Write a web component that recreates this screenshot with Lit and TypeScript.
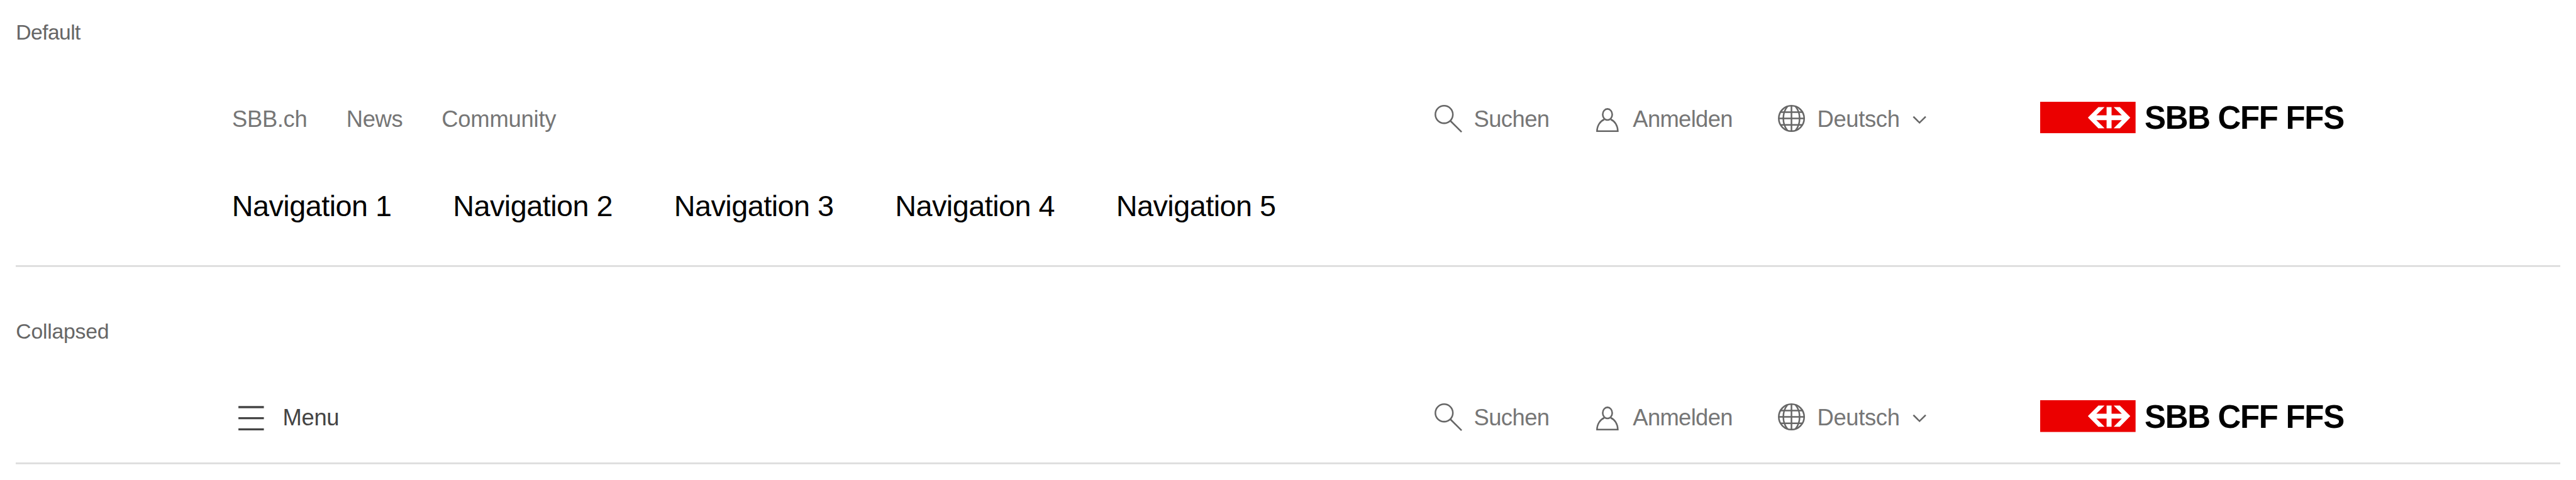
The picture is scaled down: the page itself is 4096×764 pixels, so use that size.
import { LitElement, html, css, svg, unsafeCSS } from "lit";
import { customElement, property } from "lit/decorators.js";

const SCALE = 4096 / 4860;
const u = (n: number) => unsafeCSS(`${(n * SCALE).toFixed(3)}px`);

const searchIcon = svg`
  <circle cx="24" cy="24" r="16.5" />
  <path d="M36 36.2 57 57.2" />`;

const personIcon = svg`
  <ellipse cx="33.2" cy="24" rx="9" ry="10.5" />
  <path d="M27.4 33.2C19.5 36.5 13.5 45 13.5 55.5H52.7C52.7 45 47 36.5 39.2 33.2" />`;

const globeIcon = svg`
  <circle cx="31.5" cy="31.5" r="24" />
  <path d="M31.5 7.5V55.5M7.5 31.5H55.5M10.7 19.5H52.3M10.7 43.5H52.3" />
  <path d="M23.7 9.2C13.6 21 13.6 42 23.7 53.8M39.3 9.2C49.4 21 49.4 42 39.3 53.8" />`;

@customElement("sbb-logo")
export class SbbLogo extends LitElement {
  static styles = css`
    :host { display: flex; align-items: flex-start; }
    .sign { display: block; flex: none; width: ${u(180)}; height: ${u(60)}; }
    .name {
      padding: ${u(2.9)} 0 0 ${u(17)};
      font-size: ${u(60.5)};
      font-weight: 700;
      line-height: ${u(58)};
      letter-spacing: ${u(-1.55)};
      color: #000;
      white-space: nowrap;
    }
  `;
  render() {
    return html`
      <svg class="sign" viewBox="0 0 180 60">
        <rect width="180" height="60" fill="#eb0000" />
        <path fill="#fff" d="M90 30 109.8 10H121.5L106 25.4H125.3V10H134.7V25.4H154L138.6 10H150.3L170 30 150.3 50H138.6L154 34.6H134.7V50H125.3V34.6H106L121.5 50H109.8Z" />
      </svg>
      <span class="name">SBB CFF FFS</span>`;
  }
}

@customElement("sbb-actions")
export class SbbActions extends LitElement {
  static styles = css`
    :host {
      display: grid;
      grid-template-columns: ${u(300)} ${u(348)} ${u(501)};
      color: #767676;
    }
    .action { display: flex; align-items: flex-start; }
    .icon {
      display: block;
      flex: none;
      width: ${u(60)};
      height: ${u(60)};
      fill: none;
      stroke: #666;
      stroke-width: 3;
    }
    .chevron { width: ${u(36)}; }
    .text {
      padding: ${u(6.3)} 0 0 ${u(20.6)};
      font-size: ${u(43.2)};
      line-height: ${u(54)};
      white-space: nowrap;
    }
    .search { letter-spacing: ${u(-0.66)}; }
    .login { letter-spacing: ${u(-0.8)}; }
    .lang { box-sizing: border-box; width: ${u(195)}; letter-spacing: ${u(-0.43)}; }
  `;
  render() {
    return html`
      <div class="action">
        <svg class="icon" viewBox="0 0 60 60">${searchIcon}</svg>
        <span class="text search">Suchen</span>
      </div>
      <div class="action">
        <svg class="icon" viewBox="0 0 60 60">${personIcon}</svg>
        <span class="text login">Anmelden</span>
      </div>
      <div class="action">
        <svg class="icon" viewBox="0 0 60 60">${globeIcon}</svg>
        <span class="text lang">Deutsch</span>
        <svg class="icon chevron" viewBox="0 0 36 60"><path d="M6.4 28 18 39.5 29.6 28" /></svg>
      </div>`;
  }
}

@customElement("sbb-header")
export class SbbHeader extends LitElement {
  @property({ type: Boolean }) collapsed = false;

  static styles = css`
    :host { display: block; }
    .bar { display: grid; grid-template-columns: ${u(2263)} ${u(1149)} auto; padding-left: ${u(407)}; height: ${u(60)}; }
    .meta { display: grid; grid-template-columns: ${u(215.6)} ${u(179.7)} auto; padding-left: ${u(0.9)}; color: #767676; }
    .link, .menu-text {
      padding-top: ${u(6.3)};
      font-size: ${u(43.2)};
      line-height: ${u(54)};
      letter-spacing: ${u(-0.42)};
      white-space: nowrap;
    }
    .community { letter-spacing: ${u(-0.25)}; }
    .nav {
      display: grid;
      grid-template-columns: repeat(5, ${u(417.1)});
      margin-top: ${u(107.6)};
      padding: 0 0 ${u(81.4)} ${u(407.4)};
      font-size: ${u(55.5)};
      line-height: ${u(60)};
      letter-spacing: ${u(-0.6)};
      color: #000;
    }
    .menu { display: flex; padding-left: ${u(1)}; color: #444; }
    .menu-text { padding-left: ${u(23.5)}; }
    .burger { display: block; width: ${u(72)}; height: ${u(60)}; stroke: #444; stroke-width: 4; }
    .rule { height: 3px; background: #dfdfdf; }
    .rule.tight { margin-top: ${u(57)}; }
  `;

  private renderLeft() {
    return this.collapsed
      ? html`<div class="menu">
          <svg class="burger" viewBox="0 0 72 60"><path d="M12 13H60M12 34H60M12 55H60" /></svg>
          <span class="menu-text">Menu</span>
        </div>`
      : html`<div class="meta">
          <span class="link">SBB.ch</span>
          <span class="link">News</span>
          <span class="link community">Community</span>
        </div>`;
  }

  render() {
    return html`
      <div class="bar">
        ${this.renderLeft()}
        <sbb-actions></sbb-actions>
        <sbb-logo></sbb-logo>
      </div>
      ${this.collapsed
        ? null
        : html`<nav class="nav">${[1, 2, 3, 4, 5].map((n) => html`<span>Navigation ${n}</span>`)}</nav>`}
      <div class="rule ${this.collapsed ? "tight" : ""}"></div>`;
  }
}

@customElement("app-root")
export class AppRoot extends LitElement {
  static styles = css`
    :host {
      display: block;
      height: 764px;
      overflow: hidden;
      background: #fff;
      font-family: "Liberation Sans", Arial, sans-serif;
    }
    .variant { box-sizing: border-box; height: ${u(564)}; padding: ${u(31.1)} ${u(30)} 0; }
    .label {
      height: ${u(60)};
      margin-bottom: ${u(100.9)};
      font-size: ${u(40)};
      line-height: ${u(60)};
      letter-spacing: ${u(-0.72)};
      color: #666;
    }
    .label.second { letter-spacing: ${u(-0.25)}; }
  `;
  render() {
    return html`
      <section class="variant">
        <div class="label">Default</div>
        <sbb-header></sbb-header>
      </section>
      <section class="variant">
        <div class="label second">Collapsed</div>
        <sbb-header collapsed></sbb-header>
      </section>`;
  }
}
